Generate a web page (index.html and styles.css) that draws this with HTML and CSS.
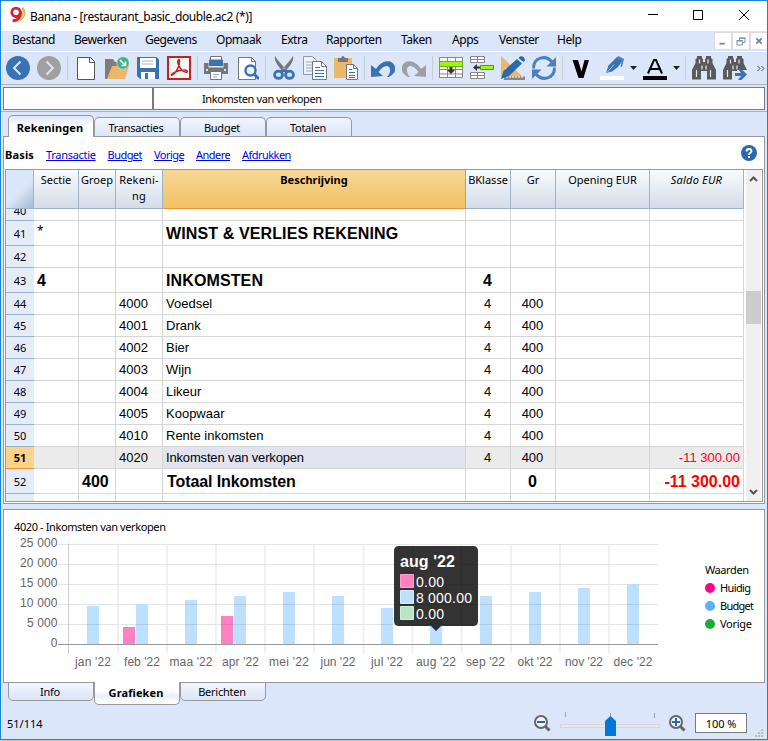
FILE: index.html
```html
<!DOCTYPE html>
<html lang="nl">
<head>
<meta charset="utf-8">
<title>Banana - [restaurant_basic_double.ac2 (*)]</title>
<link rel="stylesheet" href="styles.css">
</head>
<body>
<div class="window">
  <header class="titlebar">
    <svg class="logo" width="18" height="18" viewBox="0 0 18 18"><path d="M14 1.500c4 5 2 13.500-8 14.500C13 12.500 15 8 13.500 2z" fill="#f5dc45" stroke="#b09228" stroke-width=".7"/><circle cx="7" cy="6.300" r="4.200" fill="none" stroke="#d8203c" stroke-width="2.800"/><path d="M11.600 5.500c.5 5-2.500 8.500-8 9.500" fill="none" stroke="#d8203c" stroke-width="2.800"/></svg>
    <span class="title">Banana - [restaurant_basic_double.ac2 (*)]</span>
    <svg class="winctl" width="102" height="12" viewBox="0 0 102 12" fill="none" stroke="#000"><path d="M0 5.500h10M45.500 1.500h9v9h-9zM91 1l10 10M101 1l-10 10"/></svg>
  </header>

  <nav class="menubar">
    <span>Bestand</span><span>Bewerken</span><span>Gegevens</span><span>Opmaak</span><span>Extra</span><span>Rapporten</span><span>Taken</span><span>Apps</span><span>Venster</span><span>Help</span>
    <div class="mdi">
      <svg viewBox="0 0 18 18"><path d="M5 12h6" stroke="#74869b" stroke-width="2"/></svg>
      <svg viewBox="0 0 18 18" fill="none" stroke="#74869b"><path d="M7.500 8V5.500h6v5H11M7 6h7M4.500 8.500h6v5h-6zM4 9h7"/></svg>
      <svg viewBox="0 0 18 18"><path d="M6 6l6 6M12 6l-6 6" stroke="#74869b" stroke-width="2"/></svg>
    </div>
  </nav>

  <div class="toolbar">
    <svg class="icon" viewBox="0 0 24 24"><circle cx="12" cy="12" r="12" fill="#3873b3"/><path d="M14.500 5.500L8 12l6.500 6.500" fill="none" stroke="#dce6fa" stroke-width="2"/></svg>
    <svg class="icon" viewBox="0 0 24 24"><circle cx="12" cy="12" r="12" fill="#a0a0a0"/><path d="M9.500 5.500L16 12l-6.500 6.500" fill="none" stroke="#dce6fa" stroke-width="2"/></svg>
    <i class="sep"></i>
    <svg class="icon" viewBox="0 0 24 24"><path d="M3.500 1.500h13l4 4v18h-17z" fill="#fff" stroke="#555"/><path d="M15.500 1.500v5h5" fill="none" stroke="#555"/></svg>
    <svg class="icon" viewBox="0 0 24 24"><path d="M0 23V3h8l2 3h10v17z" fill="#7d7d7d"/><path d="M7 10h17l-4 13H2z" fill="#ebb76a"/><circle cx="18" cy="7" r="6.200" fill="#45ad87" stroke="#dce6fa" stroke-width=".6"/><path d="M15 4l5 5M20.500 5.500v4h-4" fill="none" stroke="#fff" stroke-width="1.600"/></svg>
    <svg class="icon" viewBox="0 0 24 24"><path d="M1 1h19.500L23 3.500V23H4l-3-3z" fill="#3873b3"/><path d="M4 2h16v10H4zM5 16h14v7H5z" fill="#fff"/><path d="M6 5h11M6 8h11" stroke="#ccc" stroke-width="1.300"/><path d="M9 17h3v6H9z" fill="#3873b3"/></svg>
    <svg class="icon" viewBox="0 0 24 24"><path d="M1 1h22v22H1z" fill="#f4f5f8" stroke="#c2231f" stroke-width="2"/><path d="M5 19c3.500-1 8-9 7.500-14.500-.3-2-2.500-.5-1.500 3 1.500 5 5 8.500 8 8.800 2 0 1.500-2.500-1.500-2.300-5 .2-9 1.500-12 3.500-2 1.500-.8 2-.5 1.500z" fill="none" stroke="#c2231f" stroke-width="1.500"/></svg>
    <i class="sep"></i>
    <svg class="icon" viewBox="0 0 24 24"><path d="M6.500.5h11V6h-11z" fill="#fff" stroke="#777"/><path d="M0 7h4.500v4.500h15V7H24v11H0z" fill="#777"/><path d="M5 3.500h14V10H5z" fill="#3873b3"/><path d="M6.500 15.500h11v8h-11z" fill="#fff" stroke="#777"/><path d="M2 14h2M20 14h2" stroke="#fff" stroke-width="1.500"/><path d="M9 18.500h6M9 21h4" stroke="#8bb0df" stroke-width="1.200"/></svg>
    <svg class="icon" viewBox="0 0 24 24"><path d="M3.500 1.500h13l4 4v18h-17z" fill="#fff" stroke="#777"/><path d="M16.500 1.500v4h4" fill="none" stroke="#777"/><circle cx="15.500" cy="14.500" r="5" fill="#edf3fc" stroke="#3873b3" stroke-width="2.400"/><path d="M19 18l5 5" stroke="#3873b3" stroke-width="2.800"/></svg>
    <i class="sep"></i>
    <svg class="icon" viewBox="0 0 24 24"><path d="M3 0c-1.500 5.500 5 12 8 16l3-2.500C11 10 6 5 3 0zM21 0c1.500 5.500-5 12-8 16l-3-2.500C13 10 18 5 21 0z" fill="#777"/><g fill="none" stroke="#3873b3" stroke-width="2.800"><ellipse cx="6.500" cy="18.800" rx="4" ry="3.600"/><ellipse cx="17.500" cy="18.800" rx="4" ry="3.600"/><path d="M9 16l3-2 3 2"/></g></svg>
    <svg class="icon" viewBox="0 0 24 24"><path d="M.5.500h9l4 4v14H.5z" fill="#eef2fc" stroke="#8d9aaa"/><path d="M3 6h7M3 9h7M3 12h7M3 15h7" stroke="#89aed8"/><path d="M9.500 5.500h9l5 5v13h-14z" fill="#fff" stroke="#777"/><path d="M18.500 5.500v5h5" fill="none" stroke="#777"/><path d="M12 11.500h5M12 14.500h9M12 17.500h9M12 20.500h9" stroke="#3873b3"/></svg>
    <svg class="icon" viewBox="0 0 24 24"><path d="M0 2h18v20H0z" fill="#ebb76a"/><path d="M4 2h3q2-4 4 0h3v4H4z" fill="#777"/><path d="M12.500 8.500h7l4 4v11h-11z" fill="#fff" stroke="#777"/><path d="M19.500 8.500v4h4" fill="none" stroke="#777"/><path d="M15 13.500h3M15 16.500h6M15 19.500h6M15 21.500h6" stroke="#3873b3"/></svg>
    <i class="sep"></i>
    <svg class="icon" viewBox="0 0 24 24"><path d="M0 9v12l12-1-4.500-4C12 9 18 8 19 13c.5 3-1 6-3 8h2c5-3 7-6 6-10-2-8-13-8-19 2z" fill="#3873b3"/></svg>
    <svg class="icon" viewBox="0 0 24 24"><path d="M24 9v12l-12-1 4.500-4C12 9 6 8 5 13c-.5 3 1 6 3 8H6c-5-3-7-6-6-10 2-8 13-8 19 2z" fill="#a0a0a0"/></svg>
    <i class="sep"></i>
    <svg class="icon" viewBox="0 0 24 24"><path d="M.5 1.500h23v20H.5zM8.500 1v21M16.500 1v21M0 13.500h24M0 18h24" fill="#fff" stroke="#888"/><path d="M.5 5.500h23v5H.5z" fill="#9df80e" stroke="#67b500"/><path d="M10.500 11h3v3H16L12 18l-4-4h2.500z" fill="#333"/></svg>
    <svg class="icon" viewBox="0 0 24 24"><path d="M.5.500h14v6H.5zM7.500.5v6M.5 3.500h14M.5 16.500h14v6H.5zM7.500 16.500v6M.5 19.500h14" fill="#fff" stroke="#888"/><path d="M10.500 9.500h13v4h-13z" fill="#9df80e" stroke="#579900"/><path d="M3 11.500L7 8v2.500h3v2H7V15z" fill="#333"/></svg>
    <svg class="icon" viewBox="0 0 24 24"><path d="M0 0l22 21H0z" fill="#ebb76a"/><path d="M4 11l5 5H4z" fill="#dce6fa"/><path d="M3 20.500h21V24H3z" fill="#888"/><path d="M6 20v2M9 20v2M12 20v2M15 20v2M18 20v2M21 20v2" stroke="#fff"/><path d="M0 23l2.500-8L16 3l5 4.500L8 20z" fill="#2a69ad"/><path d="M17.500 2l1.500-1.500q4-1 5 4L22.500 6z" fill="#2a69ad"/></svg>
    <svg class="icon" viewBox="0 0 24 24"><g fill="none" stroke="#4b80bb" stroke-width="3"><path d="M1.500 12.500C1.500 1 14-1.500 20 6M22.500 11.500C22.500 23 10 25.500 4 18"/></g><path d="M24 1v9.500h-9.500zM0 23v-9.500h9.500z" fill="#4b80bb"/></svg>
    <i class="sep"></i>
    <svg class="icon" viewBox="0 0 24 24"><path d="M3.500 4h5.500l3.500 11.500L15.500 4H20l-5.500 18h-5z" fill="#000"/></svg>
    <svg class="icon" viewBox="0 0 24 24"><path d="M0 20h24v4H0z" fill="#fff"/><path d="M6 17L8.500 9.500l8-8L23 4l-5 7-6 4.500z" fill="#3873b3"/><path d="M16 2L18.500 0l5.500 3-2 8-1.500-.5 1-5z" fill="#4b80bb"/><path d="M7 16.500l7-8" stroke="#a9c7ea"/></svg>
    <svg class="drop" viewBox="0 0 7 4"><path d="M0 0h7L3.500 4z" fill="#222"/></svg>
    <svg class="icon" viewBox="0 0 24 24"><path d="M0 20h24v4H0z" fill="#000"/><path d="M5 17.500L11 4h2l6 13.500M7 13h10" fill="none" stroke="#000" stroke-width="2"/></svg>
    <svg class="drop" viewBox="0 0 7 4"><path d="M0 0h7L3.500 4z" fill="#222"/></svg>
    <i class="sep last"></i>
    <svg class="icon" viewBox="0 0 24 24"><use href="#bino"/></svg>
    <svg class="icon" viewBox="0 0 24 24"><defs><g id="bino"><path d="M5 0h5v2l1 1v3h2V3l1-1V0h5v2l1.500 1v4L24 14v9.500h-9V15H9v8.500H0V14l3.500-7V3L5 2z" fill="#5a5a5a"/><path d="M7.500 3.500v4M16 3.500v4M10 9.500v4M14 9.500v4M4.500 14v7M18.500 14v7" stroke="#dfe8fa" stroke-width="1.200"/></g></defs><use href="#bino"/><path d="M14 14h11v11H14z" fill="#dbe6fa"/><path d="M12 17h6l-3-4h3.500l5.500 5.500-5.500 5.500H15l3-4h-6z" fill="#3873b3"/></svg>
    <svg class="more" width="8" height="7" viewBox="0 0 8 7" fill="none" stroke="#444"><path d="M.5 1L3 3.500.5 6M4.500 1L7 3.500 4.500 6"/></svg>
  </div>

  <div class="infobar"><div class="cell-id"></div><div class="cell-text">Inkomsten van verkopen</div></div>

  <div class="workspace">
    <div class="tabs top">
      <div class="tab active">Rekeningen</div><div class="tab">Transacties</div><div class="tab">Budget</div><div class="tab">Totalen</div>
    </div>
    <section class="panel accounts">
      <div class="views">
        <b>Basis</b><a class="wide">Transactie</a><a>Budget</a><a>Vorige</a><a>Andere</a><a>Afdrukken</a>
        <svg class="help" width="16" height="16" viewBox="0 0 16 16"><circle cx="8" cy="8" r="8" fill="#2a69ad"/><path d="M5.500 6.500Q5.500 4 8 4t2.500 2.200C10.500 8 8 7.700 8 10M8 11v2" fill="none" stroke="#fff" stroke-width="1.900"/></svg>
      </div>
      <div class="sheet">
        <div class="grid">
          <div class="row head"><i></i><span>Sectie</span><span>Groep</span><span class="acc">Rekeni-<br>ng</span><span class="sel">Beschrijving</span><span>BKlasse</span><span>Gr</span><span>Opening EUR</span><span class="it">Saldo EUR</span></div>
          <div class="row first"><i>40</i><span></span><span></span><span></span><span></span><span></span><span></span><span></span><span></span></div>
          <div class="row big"><i>41</i><span class="star">*</span><span></span><span></span><span class="caps">WINST &amp; VERLIES REKENING</span><span></span><span></span><span></span><span></span></div>
          <div class="row"><i>42</i><span></span><span></span><span></span><span></span><span></span><span></span><span></span><span></span></div>
          <div class="row big"><i>43</i><span>4</span><span></span><span></span><span class="caps">INKOMSTEN</span><span>4</span><span></span><span></span><span></span></div>
          <div class="row"><i>44</i><span></span><span></span><span>4000</span><span>Voedsel</span><span>4</span><span>400</span><span></span><span></span></div>
          <div class="row"><i>45</i><span></span><span></span><span>4001</span><span>Drank</span><span>4</span><span>400</span><span></span><span></span></div>
          <div class="row"><i>46</i><span></span><span></span><span>4002</span><span>Bier</span><span>4</span><span>400</span><span></span><span></span></div>
          <div class="row"><i>47</i><span></span><span></span><span>4003</span><span>Wijn</span><span>4</span><span>400</span><span></span><span></span></div>
          <div class="row"><i>48</i><span></span><span></span><span>4004</span><span>Likeur</span><span>4</span><span>400</span><span></span><span></span></div>
          <div class="row"><i>49</i><span></span><span></span><span>4005</span><span>Koopwaar</span><span>4</span><span>400</span><span></span><span></span></div>
          <div class="row"><i>50</i><span></span><span></span><span>4010</span><span>Rente inkomsten</span><span>4</span><span>400</span><span></span><span></span></div>
          <div class="row current"><i>51</i><span></span><span></span><span>4020</span><span>Inkomsten van verkopen</span><span>4</span><span>400</span><span></span><span>-11 300.00</span></div>
          <div class="row big total"><i>52</i><span></span><span>400</span><span></span><span>Totaal Inkomsten</span><span></span><span>0</span><span></span><span>-11 300.00</span></div>
          <div class="row cut"><i>53</i><span></span><span></span><span></span><span></span><span></span><span></span><span></span><span></span></div>
        </div>
        <div class="scroll">
          <svg width="9" height="6" viewBox="0 0 9 6"><path d="M1 5l3.500-3.500L8 5" fill="none" stroke="#555" stroke-width="2"/></svg>
          <div class="thumb"></div>
          <svg width="9" height="6" viewBox="0 0 9 6"><path d="M1 1l3.500 3.500L8 1" fill="none" stroke="#555" stroke-width="2"/></svg>
        </div>
      </div>
    </section>

    <section class="panel chart">
      <svg width="760" height="172" viewBox="4 510 760 172">
        <text x="14" y="531" class="ui" textLength="152">4020 - Inkomsten van verkopen</text>
        <g class="vline"><path d="M118 544v109M167 544v109M216 544v109M265 544v109M314 544v109M363.500 544v109M412.500 544v109M461.500 544v109M511 544v109M560 544v109M609 544v109"/></g>
        <path class="hline" d="M58 544.500h600M58 564.500h600M58 584.500h600M58 604.500h600M58 624.500h600"/>
        <path d="M68.500 544v110" stroke="#ccc"/>
        <g fill="#bee0ff"><path d="M87 606h12v38H87zM136 604h12v40h-12zM185 600h12v44h-12zM234 596h12v48h-12zM283 592h12v52h-12zM332 596h12v48h-12zM381 608h12v36h-12zM430 612h12v32h-12zM480 596h12v48h-12zM529 592h12v52h-12zM578 588h12v56h-12zM627 584h12v60h-12z"/></g>
        <path d="M123 627h12v17h-12zM221 616h12v28h-12z" fill="#ff80c3"/>
        <path d="M87 624.500h12M136 624.500h12M185 624.500h12M185 604.500h12M234 624.500h12M234 604.500h12M283 624.500h12M283 604.500h12M332 624.500h12M332 604.500h12M381 624.500h12M480 624.500h12M480 604.500h12M529 624.500h12M529 604.500h12M578 624.500h12M578 604.500h12M627 624.500h12M627 604.500h12" stroke="#abcae6"/>
        <path d="M221 624.500h12" stroke="#e673b0"/>
        <path d="M58 644.500h600" stroke="#999"/>
        <g class="axis" text-anchor="end"><text x="57.500" y="547" textLength="37.500">25 000</text><text x="57.500" y="567" textLength="37.500">20 000</text><text x="57.500" y="587" textLength="37.500">15 000</text><text x="57.500" y="607" textLength="37.500">10 000</text><text x="57.500" y="627" textLength="30.500">5 000</text><text x="57.500" y="647">0</text></g>
        <g class="axis" text-anchor="middle"><text x="93" y="666" textLength="36">jan '22</text><text x="142" y="666" textLength="36">feb '22</text><text x="191" y="666" textLength="43">maa '22</text><text x="240.500" y="666" textLength="37">apr '22</text><text x="289" y="666" textLength="40">mei '22</text><text x="338" y="666" textLength="35">jun '22</text><text x="387" y="666" textLength="32">jul '22</text><text x="436" y="666" textLength="40">aug '22</text><text x="485.500" y="666" textLength="39">sep '22</text><text x="535" y="666" textLength="35">okt '22</text><text x="584" y="666" textLength="38">nov '22</text><text x="633" y="666" textLength="39">dec '22</text></g>
        <path d="M399 546h74q5 0 5 5v70q0 5-5 5h-32l-5 5-5-5h-32q-5 0-5-5v-70q0-5 5-5z" fill="#000" fill-opacity=".8"/>
        <g stroke-width="1"><path d="M400.500 574.500h13v13h-13z" fill="#ff80c3" stroke="#ff9fd2"/><path d="M400.500 590.500h13v13h-13z" fill="#bee0ff" stroke="#d8ecff"/><path d="M400.500 606.500h13v13h-13z" fill="#bae5c2" stroke="#d1f0d7"/></g>
        <g class="tip"><text x="400" y="567" class="tiphead" textLength="55">aug '22</text><text x="416" y="587" textLength="28">0.00</text><text x="416" y="603" textLength="56">8 000.00</text><text x="416" y="619" textLength="28">0.00</text></g>
        <g class="ui"><text x="705" y="574" textLength="44">Waarden</text><text x="720" y="592" textLength="31">Huidig</text><text x="720" y="610" textLength="34">Budget</text><text x="720" y="628" textLength="32">Vorige</text></g>
        <circle cx="710" cy="588" r="5" fill="#ff008c"/><circle cx="710" cy="606" r="5" fill="#58b1ff"/><circle cx="710" cy="624" r="5" fill="#20ab38"/>
      </svg>
    </section>
    <div class="tabs bottom">
      <div class="tab">Info</div><div class="tab active">Grafieken</div><div class="tab">Berichten</div>
    </div>
  </div>

  <footer class="status">
    <span class="pos">51/114</span>
    <svg class="zoomer" width="156" height="28" viewBox="532 710 156 28">
      <g fill="none" stroke="#666"><circle cx="541" cy="722" r="6" stroke-width="2" fill="#eef3fc"/><circle cx="676" cy="722" r="6" stroke-width="2" fill="#eef3fc"/><path d="M545.500 726.500l4 4M680.500 726.500l4 4" stroke-width="3"/><path d="M565.500 712v5M610.500 713v5M654.500 713v5" stroke="#a0a0a0"/></g>
      <path d="M537 722h8M672 722h8M676 718v8" stroke="#2a69ad" stroke-width="2"/>
      <path d="M560.500 724.500h99v3h-99z" fill="#e7eaea" stroke="#d6d6d6"/>
      <path d="M605 736v-15l5.500-5 5.500 5v15z" fill="#0078d7"/>
    </svg>
    <span class="pct">100 %</span>
    <svg class="grip" width="8" height="8" viewBox="0 0 8 8"><path d="M6 0h2v2H6zM3 3h2v2H3zM6 3h2v2H6zM0 6h2v2H0zM3 6h2v2H3zM6 6h2v2H6z" fill="#bcbcbc"/></svg>
  </footer>
</div>
</body>
</html>
```
FILE: styles.css
```css
* { box-sizing: border-box; }
body { margin: 0; background: #c9c9c9; font: 12px "Noto Sans", "Open Sans", sans-serif; color: #000; overflow: hidden; }
svg { display: block; flex: none; }
.window { width: 768px; height: 740px; border: 1px solid #1883d7; background: #dbe6fa; display: flex; flex-direction: column; overflow: hidden; }

.titlebar { height: 30px; flex: none; background: #fff; display: flex; align-items: center; padding: 0 17px 0 8px; }
.logo { margin-top: -2px; }
.title { margin-left: 3px; font-size: 12px; letter-spacing: -0.38px; white-space: nowrap; }
.winctl { margin: -3px 0 0 auto; }

.menubar { height: 21px; flex: none; display: grid; grid-template-columns: 62px 71px 71px 65px 45px 75px 51px 47px 58px 60px 1fr; padding-left: 11px; line-height: 18px; letter-spacing: -0.45px; border-bottom: 1px solid #fff; font-size: 12px; }
.mdi { display: flex; justify-content: flex-end; padding-top: 1px; height: 19px; margin-right: -1px; background: #dbe6fa; }
.mdi svg { width: 18px; height: 18px; background: #fff; border: 1px solid #dcdcdc; }

.toolbar { height: 33px; flex: none; display: flex; align-items: center; gap: 6px; padding: 0 0 0 5px; border-bottom: 1px solid #b0b2b5; }
.icon { width: 24px; height: 24px; }
.icon + .icon { margin-left: 1px; }
.sep { width: 1px; height: 24px; background: #c8ccd4; flex: none; }
.sep.last { margin-left: -1px; }
.drop { width: 7px; height: 4px; }
.more { margin-left: 4px; }

.infobar { height: 27px; flex: none; padding: 2px 2px 2px; border-bottom: 1px solid #b0b2b5; display: flex; }
.infobar > div { height: 23px; background: #fff; border: 1px solid #7b7b7b; }
.infobar .cell-id { width: 151px; border-right-width: 2px; }
.infobar .cell-text { flex: 1; border-left: 0; padding-left: 48px; line-height: 22px; font-size: 11px; letter-spacing: -0.4px; }

.workspace { display: flex; flex-direction: column; padding: 0 2px; }
.tabs { display: flex; padding-left: 5px; position: relative; z-index: 1; font-size: 11px; }
.tab { width: 86px; border: 1px solid #999; text-align: center; background: linear-gradient(#f2f5fc, #dbe6fa); letter-spacing: -0.25px; padding-right: 2px; }
.tabs.top { height: 25px; align-items: flex-end; }
.tabs.top .tab { height: 19px; border-radius: 5px 5px 0 0; border-bottom: 0; line-height: 20px; margin-bottom: 1px; }
.tabs.top .tab.active { height: 22px; background: linear-gradient(#dbe6fa, #fff 45%); font-weight: bold; margin: 0; line-height: 23px; letter-spacing: 0.1px; }
.panel { border: 1px solid #999; background: #fff; }
.accounts { height: 368px; margin-top: -1px; padding: 0 1px 1px; }
.views { height: 32px; display: flex; align-items: center; gap: 12px; font-size: 11px; letter-spacing: -0.55px; padding-top: 3px; }
.views a { color: #0000ee; text-decoration: underline; }
.views .wide { letter-spacing: -0.3px; }
.views b { letter-spacing: 0.15px; }
.help { margin: -3px 6px 0 auto; }
.sheet { height: 333px; border: 1px solid #999; display: flex; justify-content: space-between; overflow: hidden; }
.grid { width: 738px; }
.row { display: grid; grid-template-columns: 28px 45px 37px 47px 303px 45px 45px 94px 94px; height: 22px; font: 13px "Liberation Sans", Arial, sans-serif; line-height: 21px; }
.row > * { border-right: 1px solid #d6d6d6; border-bottom: 1px solid #d6d6d6; white-space: pre; overflow: hidden; padding: 0 3px; }
.row > i { font: 11px/22px "Noto Sans", sans-serif; text-align: center; background: #e4ecf8; border-right: 0; border-bottom-color: #9ab1ca; }
.row > :nth-child(6), .row > :nth-child(7) { text-align: center; padding: 0 4px 0 3px; }
.row > :nth-child(9) { text-align: right; color: #ff0020; }
.row:not(.big) > :nth-child(5) { letter-spacing: 0; }
.row.current > :nth-child(5) { letter-spacing: -0.17px; }
.row.big { height: 25px; font-size: 16px; font-weight: bold; line-height: 25px; }
.row.big > i { line-height: 26px; }
.row.big .caps { letter-spacing: 0.12px; }
.row.big .star { font: 12px/19px "Noto Sans", sans-serif; }
.row.total > :nth-child(5) { padding-left: 4px; letter-spacing: -0.1px; }
.row.total > :nth-child(9) { color: #f00; }
.row.first { height: 12px; }
.row.first > i { line-height: 3px; }
.row.cut { height: 8px; }
.row.current > span { background: #ebebeb; }
.row.current > :nth-child(5) { background: #e1e3f1; }
.row.current > i { background: #ffd28a; font-weight: bold; border-bottom-color: #f0913a; }
.row.head { height: 39px; font: 11px/16px "Noto Sans", sans-serif; }
.row.head > :nth-child(n) { background: linear-gradient(#f8fcfe, #d4dce9); border-color: #9ab4d0; padding: 2px 0 0; text-align: center; color: #000; letter-spacing: 0; }
.row.head > i:nth-child(n) { background: linear-gradient(135deg, #dbe6fa 55%, #a5b9d2); border-right: 1px solid #9ab4d0; }
.row.head > .acc:nth-child(n) { letter-spacing: 0.2px; }
.row.head > .sel:nth-child(n) { background: linear-gradient(#f8d797, #f1c164); border-color: #f0913a; font-weight: bold; letter-spacing: 0; }
.row.head > .it:nth-child(n) { font-style: italic; letter-spacing: 0.2px; }
.scroll { width: 16px; background: #f0f0f0; display: flex; flex-direction: column; align-items: center; padding: 6px 0; border-right: 1px solid #fff; }
.thumb { width: 15px; height: 33px; margin: 109px 0 auto; background: #cdcdcd; }

.chart { height: 174px; margin-top: 5px; }
.chart text { font-family: "Liberation Sans", Arial, sans-serif; font-size: 12px; }
.chart text.ui, .chart .ui text { font-family: "Noto Sans", sans-serif; font-size: 11px; }
.vline { stroke: #f0f0f0; stroke-width: 2; }
.hline { stroke: #e5e5e5; }
.axis { fill: #666; }
.tip { fill: #fff; }
.chart .tip text { font-size: 14px; }
.chart .tip .tiphead { font-size: 16px; font-weight: bold; }

.tabs.bottom { height: 24px; margin-top: -1px; }
.tabs.bottom .tab { height: 19px; border-radius: 0 0 5px 5px; line-height: 17px; }
.tabs.bottom .tab.active { height: 23px; background: linear-gradient(#fff 40%, #e8effc, #fff 90%); border-top: 0; font-weight: bold; line-height: 22px; letter-spacing: 0.1px; }

.status { flex: 1; display: flex; padding: 0 4px 1px 6px; font-size: 11px; }
.pos { line-height: 36px; flex: 1; }
.zoomer { margin-top: 4px; }
.pct { width: 52px; height: 20px; margin: 7px 8px 0 7px; background: #fff; border: 1px solid #7a7a7a; text-align: center; line-height: 20px; letter-spacing: -0.1px; }
.grip { margin-top: 23px; }
```
